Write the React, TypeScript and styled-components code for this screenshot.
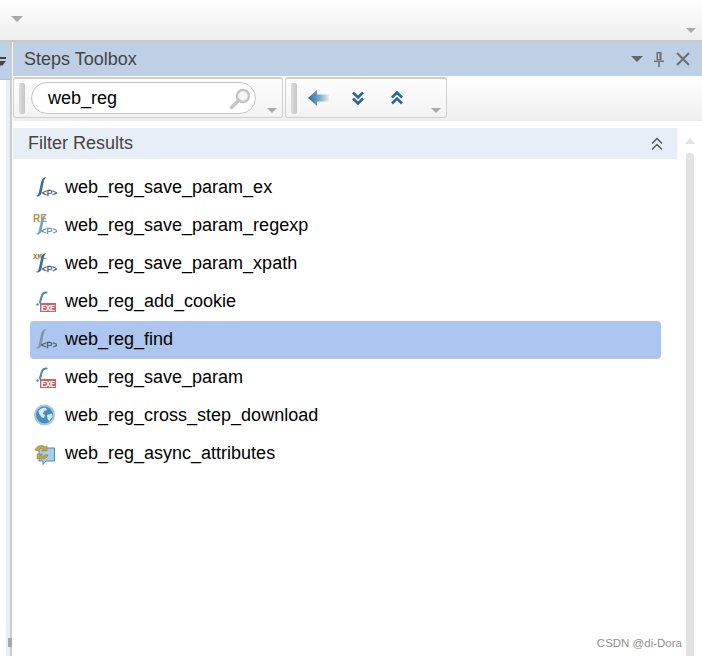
import styled, { createGlobalStyle } from 'styled-components';

const GlobalStyle = createGlobalStyle`
  html, body {
    margin: 0;
    padding: 0;
    background: #fff;
  }
  * {
    box-sizing: border-box;
  }
`;

const Page = styled.div`
  position: relative;
  display: flex;
  flex-direction: column;
  width: 702px;
  height: 656px;
  overflow: hidden;
  font-family: 'Liberation Sans', Arial, sans-serif;
  background: #fff;
`;

const TopBar = styled.div`
  display: flex;
  justify-content: space-between;
  height: 42px;
  padding: 16px 6px 0 11px;
  border-bottom: 2px solid #c9c9c9;
  background: linear-gradient(#ffffff, #eeeeee);
`;

const Caret = styled.span<{ $size?: number; $color?: string; $offset?: number }>`
  display: block;
  width: 0;
  height: 0;
  margin-top: ${(props) => props.$offset ?? 0}px;
  border-left: ${(props) => props.$size ?? 6}px solid transparent;
  border-right: ${(props) => props.$size ?? 6}px solid transparent;
  border-top: ${(props) => props.$size ?? 6}px solid ${(props) => props.$color ?? '#a9a9a9'};
`;

const Body = styled.div`
  flex: 1;
  display: flex;
  min-height: 0;
`;

const LeftStrip = styled.div`
  display: flex;
  flex-direction: column;
  width: 12px;
  background: linear-gradient(90deg, #fff 6px, #e8eff7 6px);
  border-right: 2px solid #c9cbd0;
`;

const LeftTab = styled.div`
  display: flex;
  align-items: center;
  height: 38px;
  background: #bed0e6;
  border-bottom: 1px solid #b5c3d6;
`;

const LeftGrip = styled.div`
  flex-shrink: 0;
  width: 4px;
  height: 9px;
  margin-top: auto;
  margin-left: 8px;
  margin-bottom: 9px;
  background: #a8a8a8;
`;

const Panel = styled.section`
  flex: 1;
  display: flex;
  flex-direction: column;
  min-width: 0;
  margin-left: 1px;
`;

const PanelHeader = styled.header`
  display: flex;
  align-items: center;
  height: 34px;
  padding: 0 11px;
  background: #bed0e6;
`;

const PanelTitle = styled.h2`
  flex: 1;
  margin: 0;
  color: #444;
  font-size: 18px;
  font-weight: 400;
`;

const HeaderActions = styled.div`
  display: flex;
  align-items: center;
  gap: 11px;
`;

const Toolbar = styled.div`
  display: flex;
  gap: 2px;
  height: 45px;
  padding-top: 1px;
  background: linear-gradient(#ffffff 10%, #eeeeee);
`;

const ToolGroup = styled.div<{ $width: number }>`
  position: relative;
  display: flex;
  align-items: center;
  width: ${(props) => props.$width}px;
  height: 41px;
  padding-left: 5px;
  border: 1px solid #cfcfcf;
  border-top-width: 2px;
  border-radius: 3px;
  background: linear-gradient(#fdfdfd, #f3f3f3);
`;

const Grip = styled.span`
  flex-shrink: 0;
  width: 6px;
  height: 31px;
  border-radius: 2px;
  background: linear-gradient(90deg, #dcdcdc, #c6c6c6);
`;

const SearchBox = styled.div`
  display: flex;
  align-items: center;
  justify-content: space-between;
  width: 225px;
  height: 32px;
  margin-left: 6px;
  padding: 1px 3px 0 16px;
  border: 1px solid #c4c4c4;
  border-radius: 16px;
  background: #fff;
  color: #000;
  font-size: 18px;
`;

const GroupCaret = styled.span`
  position: absolute;
  right: 5px;
  bottom: 4px;
`;

const ToolButtons = styled.div`
  display: flex;
  align-items: center;
  margin-left: 2px;
  margin-top: -1px;
`;

const ToolButton = styled.span`
  display: flex;
  align-items: center;
  justify-content: center;
  width: 39px;
`;

const Content = styled.div`
  flex: 1;
  display: flex;
  min-height: 0;
`;

const Results = styled.div`
  width: 664px;
  padding-top: 7px;
`;

const FilterHeader = styled.div`
  display: flex;
  align-items: center;
  justify-content: space-between;
  height: 31px;
  padding: 0 14px 0 15px;
  background: #e8eef7;
  color: #444;
  font-size: 18px;
`;

const StepList = styled.ul`
  margin: 10px 0 0;
  padding: 0 16px 0 17px;
  list-style: none;
`;

const StepRow = styled.li<{ $selected?: boolean }>`
  display: flex;
  align-items: center;
  gap: 8px;
  height: 38px;
  padding: 0 0 2px 3px;
  border-radius: 4px;
  background: ${(props) => (props.$selected ? '#adc6ef' : 'transparent')};
  color: #000;
  font-size: 18px;
`;

const ScrollTrack = styled.div`
  display: flex;
  flex-direction: column;
  align-items: center;
  width: 8px;
  margin-left: 9px;
  padding-top: 17px;
`;

const ScrollThumb = styled.div`
  flex: 1;
  width: 8px;
  margin-top: 9px;
  border-radius: 4px 4px 0 0;
  background: #e2e2e2;
`;

const Watermark = styled.span`
  position: absolute;
  right: 20px;
  bottom: 7px;
  color: #8f8f8f;
  font-size: 11.5px;
`;

function DoubleChevron({ up, color, width }: { up?: boolean; color: string; width: number }) {
  const first = up ? 'M1 6.5L6 1.5l5 5' : 'M1 1.5l5 5 5-5';
  const second = up ? 'M1 12.5l5-5 5 5' : 'M1 7.5l5 5 5-5';
  return (
    <svg width="12" height="14" viewBox="0 0 12 14" fill="none" stroke={color} strokeWidth={width}>
      <path d={first} />
      <path d={second} />
    </svg>
  );
}

// slanted integral sign, thick in the middle and thin at both ends
function FuncMark({ color }: { color: string }) {
  return (
    <path
      d="M2 20.500c2 .8 3.200-.2 3.800-3L8 7.500C8.700 4 10.500 2 13.500 2.200c-1.800 1.100-2.400 2.800-2.900 5.300L8.500 18c-.7 3-4 4.500-6.500 2.500z"
      fill={color}
    />
  );
}

function StepIcon({ kind }: { kind: string }) {
  if (kind === 'globe') {
    return (
      <svg width="24" height="24" viewBox="0 0 24 24">
        <circle cx="11.500" cy="12" r="9.500" fill="#4c8dbb" stroke="#a8c8dc" strokeWidth="2" />
        <path d="M5.500 8c2-3 5.500-4 7.500-3l1 2-3 1-1 3 2 1-1 3-2-.5-3-4zM14 12l5-1.500.5 3-3.500 5-1.500-3z" fill="#dce9f1" />
      </svg>
    );
  }
  if (kind === 'async') {
    return (
      <svg width="24" height="24" viewBox="0 0 24 24">
        <path d="M6 7h15.500v13H13l-3 3.500V20H6z" fill="#a7cfe8" stroke="#4a89b5" />
        <path d="M2 9c1-4 7-6 10-3l2-1v5H8.500l2-1.500C8.500 7 6 8 5 10zM15 14c-1 4-6 5-9 3l-2 1v-5h5.500l-2 1.500c2 1 4 .5 5-1z" fill="#c9a548" stroke="#8c7434" strokeWidth=".5" />
      </svg>
    );
  }
  if (kind === 'exe') {
    return (
      <svg width="24" height="24" viewBox="0 0 24 24">
        <path d="M7 13.500L8.800 7C9.300 4.800 10.800 3.500 13.500 3.500" fill="none" stroke="#4d8cb5" strokeWidth="2.200" strokeLinecap="round" />
        <circle cx="4.500" cy="15.500" r="1.200" fill="#4d8cb5" />
        <rect x="7" y="14" width="16" height="9" fill="#cb6265" />
        <text x="15" y="21.500" textAnchor="middle" fontFamily="'Liberation Mono', monospace" fontSize="8.500" fontWeight="700" textLength="14" fill="#fff">
          EXE
        </text>
      </svg>
    );
  }
  return (
    <svg width="24" height="24" viewBox="0 0 24 24">
      {kind === 're' && (
        <text x="0" y="9" fontFamily="'Liberation Sans', sans-serif" fontSize="10" fontWeight="700" fill="#b8914d">
          RE
        </text>
      )}
      {kind === 'xml' && (
        <text x="0" y="8" fontFamily="'Liberation Mono', monospace" fontSize="7.500" fontWeight="700" fill="#a8842e">
          XML
        </text>
      )}
      <FuncMark color={kind === 'selected' ? '#7f93ad' : kind === 're' ? '#6fa3c8' : '#3b6f97'} />
      <text x="16.500" y="20.500" textAnchor="middle" fontFamily="'Liberation Sans', sans-serif" fontSize={kind === 're' || kind === 'selected' ? 9.5 : 8.5} fontWeight="400" stroke={kind === 're' ? '#6d8da8' : '#38536b'} strokeWidth=".3" fill={kind === 're' ? '#6d8da8' : '#38536b'}>
        {'<P>'}
      </text>
    </svg>
  );
}

const steps = [
  { name: 'web_reg_save_param_ex', icon: 'func' },
  { name: 'web_reg_save_param_regexp', icon: 're' },
  { name: 'web_reg_save_param_xpath', icon: 'xml' },
  { name: 'web_reg_add_cookie', icon: 'exe' },
  { name: 'web_reg_find', icon: 'selected', selected: true },
  { name: 'web_reg_save_param', icon: 'exe' },
  { name: 'web_reg_cross_step_download', icon: 'globe' },
  { name: 'web_reg_async_attributes', icon: 'async' },
];

export default function App() {
  return (
    <Page>
      <GlobalStyle />
      <TopBar>
        <Caret />
        <Caret $size={5} $offset={12} />
      </TopBar>
      <Body>
        <LeftStrip>
          <LeftTab>
            <svg width="6" height="10" viewBox="0 0 6 10">
              <path d="M0 1h6v2H0zM0 5h6L2.500 9.500H0z" fill="#444" />
            </svg>
          </LeftTab>
          <LeftGrip />
        </LeftStrip>
        <Panel>
          <PanelHeader>
            <PanelTitle>Steps Toolbox</PanelTitle>
            <HeaderActions>
              <Caret $color="#666" />
              <svg width="10" height="16" viewBox="0 0 10 16">
                <path d="M2.500 1h5v8h-5zM0 9.500h10v1.500H0zM4.200 11h1.600v5H4.200z" fill="#6b6f75" />
                <path d="M4 2.500h1.500V8H4z" fill="#bed0e6" />
              </svg>
              <svg width="16" height="16" viewBox="0 0 16 16">
                <path d="M2 2l12 12M14 2L2 14" stroke="#6b6f75" strokeWidth="2" />
              </svg>
            </HeaderActions>
          </PanelHeader>
          <Toolbar>
            <ToolGroup $width={270}>
              <Grip />
              <SearchBox>
                web_reg
                <svg width="24" height="24" viewBox="0 0 24 24">
                  <circle cx="15" cy="9" r="6" fill="#f6f6f6" stroke="#c6c6c6" strokeWidth="2.500" />
                  <path d="M10 14l-6.500 6.500" stroke="#c6c6c6" strokeWidth="3.500" strokeLinecap="round" />
                </svg>
              </SearchBox>
              <GroupCaret>
                <Caret $size={5} />
              </GroupCaret>
            </ToolGroup>
            <ToolGroup $width={162}>
              <Grip />
              <ToolButtons>
                <ToolButton>
                  <svg width="21" height="16" viewBox="0 0 21 16">
                    <defs>
                      <linearGradient id="backTail" x1="0" x2="1" y1="0" y2="0">
                        <stop offset="0" stopColor="#2f6b9a" />
                        <stop offset="0.5" stopColor="#6fa3c8" />
                        <stop offset="1" stopColor="#e6f0f6" />
                      </linearGradient>
                    </defs>
                    <path d="M9 0L0 8l9 8v-4.500h12v-7H9z" fill="url(#backTail)" />
                  </svg>
                </ToolButton>
                <ToolButton>
                  <DoubleChevron color="#2f6496" width={2.6} />
                </ToolButton>
                <ToolButton>
                  <DoubleChevron up color="#2f6496" width={2.6} />
                </ToolButton>
              </ToolButtons>
              <GroupCaret>
                <Caret $size={5} />
              </GroupCaret>
            </ToolGroup>
          </Toolbar>
          <Content>
            <Results>
              <FilterHeader>
                Filter Results
                <DoubleChevron up color="#555" width={1.4} />
              </FilterHeader>
              <StepList>
                {steps.map((step) => (
                  <StepRow key={step.name} $selected={step.selected}>
                    <StepIcon kind={step.icon} />
                    {step.name}
                  </StepRow>
                ))}
              </StepList>
            </Results>
            <ScrollTrack>
              <svg width="10" height="6" viewBox="0 0 10 6">
                <path d="M5 0l5 6H0z" fill="#e2e2e2" />
              </svg>
              <ScrollThumb />
            </ScrollTrack>
          </Content>
        </Panel>
      </Body>
      <Watermark>CSDN @di-Dora</Watermark>
    </Page>
  );
}
